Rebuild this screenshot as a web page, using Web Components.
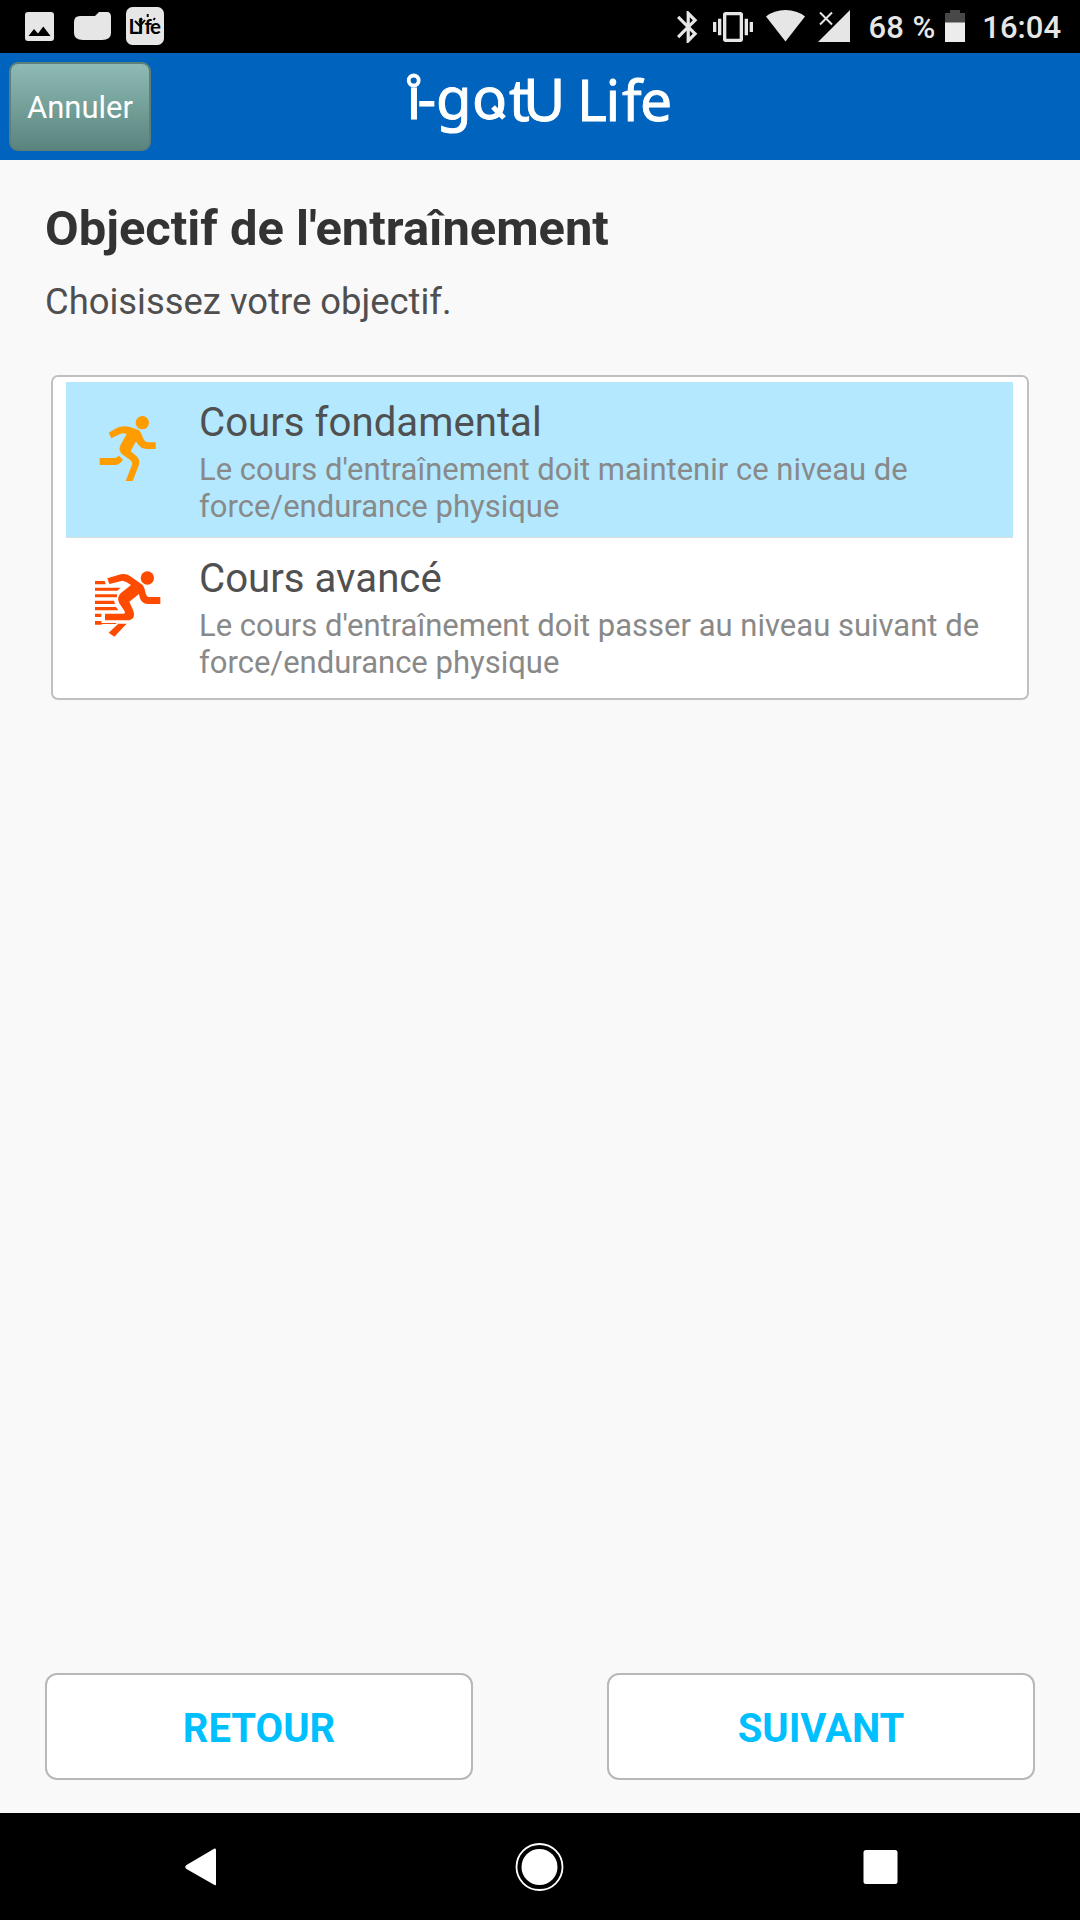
<!DOCTYPE html>
<html lang="fr">
<head>
<meta charset="utf-8">
<title>i-gotU Life</title>
<style>
  body {
    margin: 0;
    width: 1080px;
    height: 1920px;
    overflow: hidden;
    background: #f9f9f9;
    font-family: Roboto, "Liberation Sans", sans-serif;
  }
</style>
</head>
<body>
<app-screen>
  <status-bar slot="top"></status-bar>
  <app-header slot="top">Annuler</app-header>
  <page-title>
    Objectif de l'entraînement
    <span slot="hint">Choisissez votre objectif.</span>
  </page-title>
  <option-list>
    <option-row icon="run" selected>
      Cours fondamental
      <span slot="detail">Le cours d'entraînement doit maintenir ce niveau de force/endurance physique</span>
    </option-row>
    <option-row icon="sprint">
      Cours avancé
      <span slot="detail">Le cours d'entraînement doit passer au niveau suivant de force/endurance physique</span>
    </option-row>
  </option-list>
  <nav-button slot="actions">RETOUR</nav-button>
  <nav-button slot="actions">SUIVANT</nav-button>
  <system-nav slot="bottom"></system-nav>
</app-screen>

<script>
class AppScreen extends HTMLElement {
  connectedCallback() {
    this.attachShadow({ mode: 'open' });
    this.shadowRoot.innerHTML = `
      <style>
        :host { display: flex; flex-direction: column; height: 1920px; }
        main { flex: 1; }
        .actions {
          display: flex;
          justify-content: space-between;
          padding: 0 45px 33px;
        }
      </style>
      <slot name="top"></slot>
      <main><slot></slot></main>
      <div class="actions"><slot name="actions"></slot></div>
      <slot name="bottom"></slot>
    `;
  }
}

class StatusBar extends HTMLElement {
  connectedCallback() {
    this.attachShadow({ mode: 'open' });
    this.shadowRoot.innerHTML = `
      <style>
        :host {
          display: flex;
          justify-content: space-between;
          height: 53px;
          padding: 0 19px 0 25px;
          background: #000;
          color: #e6e6e6;
          font-size: 31px;
          font-weight: 500;
          line-height: 55px;
          white-space: nowrap;
        }
        div { display: flex; }
        svg { display: block; height: 53px; fill: #e6e6e6; }
        .left { gap: 20px; }
        .left svg:last-child { margin-left: -5px; }
        .right { gap: 13px; }
        .bluetooth { margin-right: 2px; }
        .percent { margin-left: 6px; word-spacing: 1px; }
        .battery { margin-left: -3px; }
        .clock { margin-left: 4px; }
      </style>
      <div class="left">
        <svg width="29" viewBox="0 0 29 53">
          <path fill-rule="evenodd" d="M3 12H26Q29 12 29 15V38Q29 41 26 41H3Q0 41 0 38V15Q0 12 3 12ZM3.500 36H25.500L18.300 26.500L13 33.500L9 29Z"/>
        </svg>
        <svg width="37" viewBox="0 0 37 53">
          <path d="M6 16H21L25 12H33Q37 12 37 17V33Q37 40 28 40H9Q0 40 0 33V22Q0 16 6 16Z"/>
        </svg>
        <svg width="38" viewBox="0 0 38 53">
          <rect y="7" width="38" height="38" rx="6.500"/>
          <text x="2.500 12 18.500 24" y="34" fill="#000" font-family="Lato, sans-serif" font-size="20.500" font-weight="700">Life</text>
          <circle cx="14.500" cy="21.500" r="1.800" fill="#000"/>
          <path d="M9 21L14 26L19 20M15 25L14 34M21.700 14V17M14.500 18L16 20M29 18L27.500 20" fill="none" stroke="#000" stroke-width="1.900"/>
        </svg>
      </div>
      <div class="right">
        <svg class="bluetooth" width="21" viewBox="0 0 21 53">
          <path transform="translate(-8 7.800) scale(1.600)" d="M17.710 7.710L12 2h-1v7.590L6.410 5 5 6.410 10.590 12 5 17.590 6.410 19 11 14.410V22h1l5.710-5.710-4.300-4.290 4.300-4.290zM13 5.830l1.880 1.880L13 9.590V5.830zm1.880 10.460L13 18.170v-3.760l1.880 1.880z"/>
        </svg>
        <svg width="40" viewBox="0 0 40 53">
          <path transform="translate(0 7) scale(1.667)" d="M0 15h2V9H0v6zm3 2h2V7H3v10zm19-8v6h2V9h-2zm-3 8h2V7h-2v10zM16.500 3h-9C6.670 3 6 3.670 6 4.500v15c0 .83.67 1.500 1.500 1.500h9c.83 0 1.500-.67 1.500-1.500v-15c0-.83-.67-1.500-1.500-1.500zM16 19H8V5h8v14z"/>
        </svg>
        <svg width="39" viewBox="0 0 39 53">
          <path d="M0 16.500Q8 10 19.500 10T39 16.500L19.500 41.500Z"/>
        </svg>
        <svg width="32" viewBox="0 0 32 53">
          <path d="M0 42L32 10V42Z"/>
          <path d="M2 12.500L14 24.500M14 12.500L2 24.500" stroke="#e6e6e6" stroke-width="2"/>
        </svg>
        <span class="percent">68 %</span>
        <svg class="battery" width="20" viewBox="0 0 20 53">
          <path d="M5 10H15V13H20V23H0V13H5Z" fill="#484848"/>
          <rect y="22.500" width="20" height="19.500" fill="#ececec"/>
        </svg>
        <span class="clock">16:04</span>
      </div>
    `;
  }
}

class AppHeader extends HTMLElement {
  connectedCallback() {
    this.attachShadow({ mode: 'open' });
    this.shadowRoot.innerHTML = `
      <style>
        :host {
          display: grid;
          grid-template-columns: 1fr auto 1fr;
          box-sizing: border-box;
          height: 107px;
          padding: 9px;
          background: #0063bd;
        }
        button {
          box-sizing: border-box;
          width: 142px;
          height: 89px;
          padding: 2px 0 0;
          border: 2px solid #5d7f79;
          border-radius: 9px;
          background: linear-gradient(#8fbbb5, #5a857f);
          color: #fff;
          font: 400 31px Roboto, "Liberation Sans", sans-serif;
        }
        svg { display: block; margin-top: -9px; }
        text { stroke: #fff; stroke-width: .9px; }
      </style>
      <button><slot></slot></button>
      <svg width="268" height="107" viewBox="406 53 268 107" fill="#fff" font-family="Noto Sans, sans-serif">
        <text x="406.500 417.500 436 472 509 523" y="118.500 118.500 118.500 118.500 120.500 120.500" font-size="58">i-gotU</text>
        <text x="577 605.500 622 640" y="121" font-size="57">Life</text>
        <circle cx="413.700" cy="80.500" r="5" fill="#0063bd" stroke="#fff" stroke-width="3.800"/>
        <path d="M493 107L504 118" stroke="#fff" stroke-width="5.300"/>
      </svg>
    `;
  }
}

class PageTitle extends HTMLElement {
  connectedCallback() {
    this.attachShadow({ mode: 'open' });
    this.shadowRoot.innerHTML = `
      <style>
        :host { display: block; padding: 41px 45px 0; }
        h1 {
          margin: 0;
          color: #333;
          font-size: 48.900px;
          font-weight: 700;
          line-height: 56px;
        }
        p {
          margin: 23px 0 0;
          color: #4f4f4f;
          font-size: 36.400px;
          line-height: 44px;
        }
      </style>
      <h1><slot></slot></h1>
      <p><slot name="hint"></slot></p>
    `;
  }
}

class OptionList extends HTMLElement {
  connectedCallback() {
    this.attachShadow({ mode: 'open' });
    this.shadowRoot.innerHTML = `
      <style>
        :host {
          display: block;
          box-sizing: border-box;
          width: 978px;
          height: 325px;
          margin: 51px auto 0;
          padding: 5px 14px 5px 13px;
          border: 2px solid #c0c0c0;
          border-radius: 7px;
          background: #fff;
        }
      </style>
      <slot></slot>
    `;
  }
}

const runners = {
  run: `
    <circle cx="187" cy="68" r="20"/>
    <path d="M86 98L110 84Q130 74 152 82L176 90Q183 95 187 109Q193 127 204 127H227V147H198Q178 145 168 124L152 154Q160 161 168 167Q180 177 177 194L158 243H137L157 192Q158 186 150 179L128 164Q113 152 122 134L140 102Q130 97 120 102L94 115Z"/>
    <path d="M59 174H102Q109 174 117 167L129 179Q118 195 105 195H59Z"/>`,
  sprint: `
    <circle cx="202" cy="66" r="20"/>
    <path d="M82 67L122 55Q138 51 150 60L188 87Q194 94 196 109Q199 123 207 123H241V144H202Q180 143 177 114L148 137L160 164Q168 187 148 193H75V173H130Q138 173 133 164L117 140Q110 124 122 112L153 87Q140 77 128 74L88 84Z"/>
    <path d="M115 203H140L103 242L86 230Z"/>
    <path d="M45 75H74L77 85H45ZM45 95H122L112 104H45ZM45 115H111V124H45ZM45 134H102L105 144H45ZM45 153H108L115 163H45ZM45 173H64V183H45ZM45 195H64V201H110L107 204H65V206H45Z"/>`
};

class OptionRow extends HTMLElement {
  connectedCallback() {
    this.attachShadow({ mode: 'open' });
    this.shadowRoot.innerHTML = `
      <style>
        :host {
          display: flex;
          height: 155px;
          padding-left: 14px;
          border-bottom: 1px solid #fff;
          color: #505050;
        }
        :host([selected]) { background: #b3e8ff; border-color: #d8dde0; }
        svg { flex: none; margin-top: 18px; fill: #ff4b00; }
        :host([selected]) svg { fill: #ff9c00; }
        .text { width: 800px; margin-left: 19px; padding-top: 17px; }
        h2 { margin: 0; font-size: 40.200px; font-weight: 400; line-height: 48px; }
        p { margin: 4px 0 0; color: #898989; font-size: 31px; line-height: 37px; }
      </style>
      <svg width="100" height="100" viewBox="0 0 300 300">${runners[this.getAttribute('icon')]}</svg>
      <div class="text">
        <h2><slot></slot></h2>
        <p><slot name="detail"></slot></p>
      </div>
    `;
  }
}

class NavButton extends HTMLElement {
  connectedCallback() {
    this.attachShadow({ mode: 'open' });
    this.shadowRoot.innerHTML = `
      <style>
        :host { display: block; }
        button {
          box-sizing: border-box;
          width: 428px;
          height: 107px;
          padding: 4px 0 0;
          border: 2px solid #b8b8b8;
          border-radius: 12px;
          background: #fff;
          color: #00bfff;
          font: 700 40px Roboto, "Liberation Sans", sans-serif;
        }
      </style>
      <button><slot></slot></button>
    `;
  }
}

class SystemNav extends HTMLElement {
  connectedCallback() {
    this.attachShadow({ mode: 'open' });
    this.shadowRoot.innerHTML = `
      <style>
        :host {
          display: flex;
          justify-content: space-between;
          align-items: center;
          height: 107px;
          padding: 0 170px;
          background: #000;
        }
        svg { fill: #fff; }
      </style>
      <svg width="60" height="60" viewBox="0 0 60 60"><path d="M44.500 11.500Q46 11 46 13V47Q46 49 44.500 48L16.500 32Q14 30 16.500 28Z"/></svg>
      <svg width="60" height="60" viewBox="0 0 60 60">
        <circle cx="29.500" cy="30" r="18"/>
        <circle cx="29.500" cy="30" r="23" fill="none" stroke="#fff" stroke-width="1.800"/>
      </svg>
      <svg width="60" height="60" viewBox="0 0 60 60"><rect x="13.500" y="13" width="34" height="34" rx="2.500"/></svg>
    `;
  }
}

customElements.define('app-screen', AppScreen);
customElements.define('status-bar', StatusBar);
customElements.define('app-header', AppHeader);
customElements.define('page-title', PageTitle);
customElements.define('option-list', OptionList);
customElements.define('option-row', OptionRow);
customElements.define('nav-button', NavButton);
customElements.define('system-nav', SystemNav);
</script>
</body>
</html>
